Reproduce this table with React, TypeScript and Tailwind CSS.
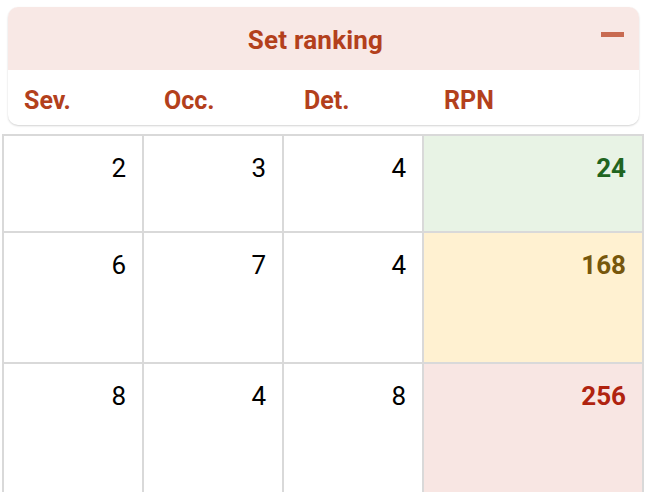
const rows = [
  { vals: [2, 3, 4], rpn: 24, h: 'h-[97px]', tone: 'bg-[#e8f3e5] text-[#1f6420]' },
  { vals: [6, 7, 4], rpn: 168, h: 'h-[131px]', tone: 'bg-[#fff1d1] text-[#77570c]' },
  { vals: [8, 4, 8], rpn: 256, h: 'h-[132px]', tone: 'bg-[#f8e6e3] text-[#b0230f]' },
]

const cols = ['Sev.', 'Occ.', 'Det.', 'RPN']

export default function App() {
  return (
    <div className="w-[646px] h-[492px] overflow-hidden bg-white font-['Roboto',sans-serif]">
      {/* Ranking header card */}
      <div className="pt-[7px] pl-[8px] pr-[7px]">
        <div className="rounded-[10px] bg-white shadow-[0_1px_2px_rgba(0,0,0,0.18)] overflow-hidden">
          <div className="relative h-[63px] bg-[#f8e8e5] flex items-center justify-center pr-[16px] pt-[3px]">
            <span className="text-[26px] font-bold text-[#b3401c] tracking-[0.2px]">Set ranking</span>
            <span className="absolute right-[15px] top-[25px] w-[23px] h-[5px] bg-[#c86a51]" />
          </div>
          <div className="h-[55px] flex items-center pl-[16px] pt-[6px]">
            {cols.map((c) => (
              <div key={c} className="w-[140px] shrink-0 text-[25px] font-bold text-[#b3401c]">
                {c}
              </div>
            ))}
          </div>
        </div>
      </div>

      {/* Values grid */}
      <div className="mt-[9px] pl-[2px]">
        {rows.map((r, i) => (
          <div key={i} className={`flex ${r.h}`}>
            {r.vals.map((v, j) => (
              <div
                key={j}
                className="w-[140px] shrink-0 border-l-2 border-t-2 border-[#d9d9d9] bg-white text-right pr-[16px] pt-[14px] text-[26px] leading-[36px] text-black"
              >
                {v}
              </div>
            ))}
            <div
              className={`w-[222px] shrink-0 border-x-2 border-t-2 border-[#d9d9d9] text-right pr-[16px] pt-[14px] text-[26px] leading-[36px] font-bold ${r.tone}`}
            >
              {r.rpn}
            </div>
          </div>
        ))}
      </div>
    </div>
  )
}
